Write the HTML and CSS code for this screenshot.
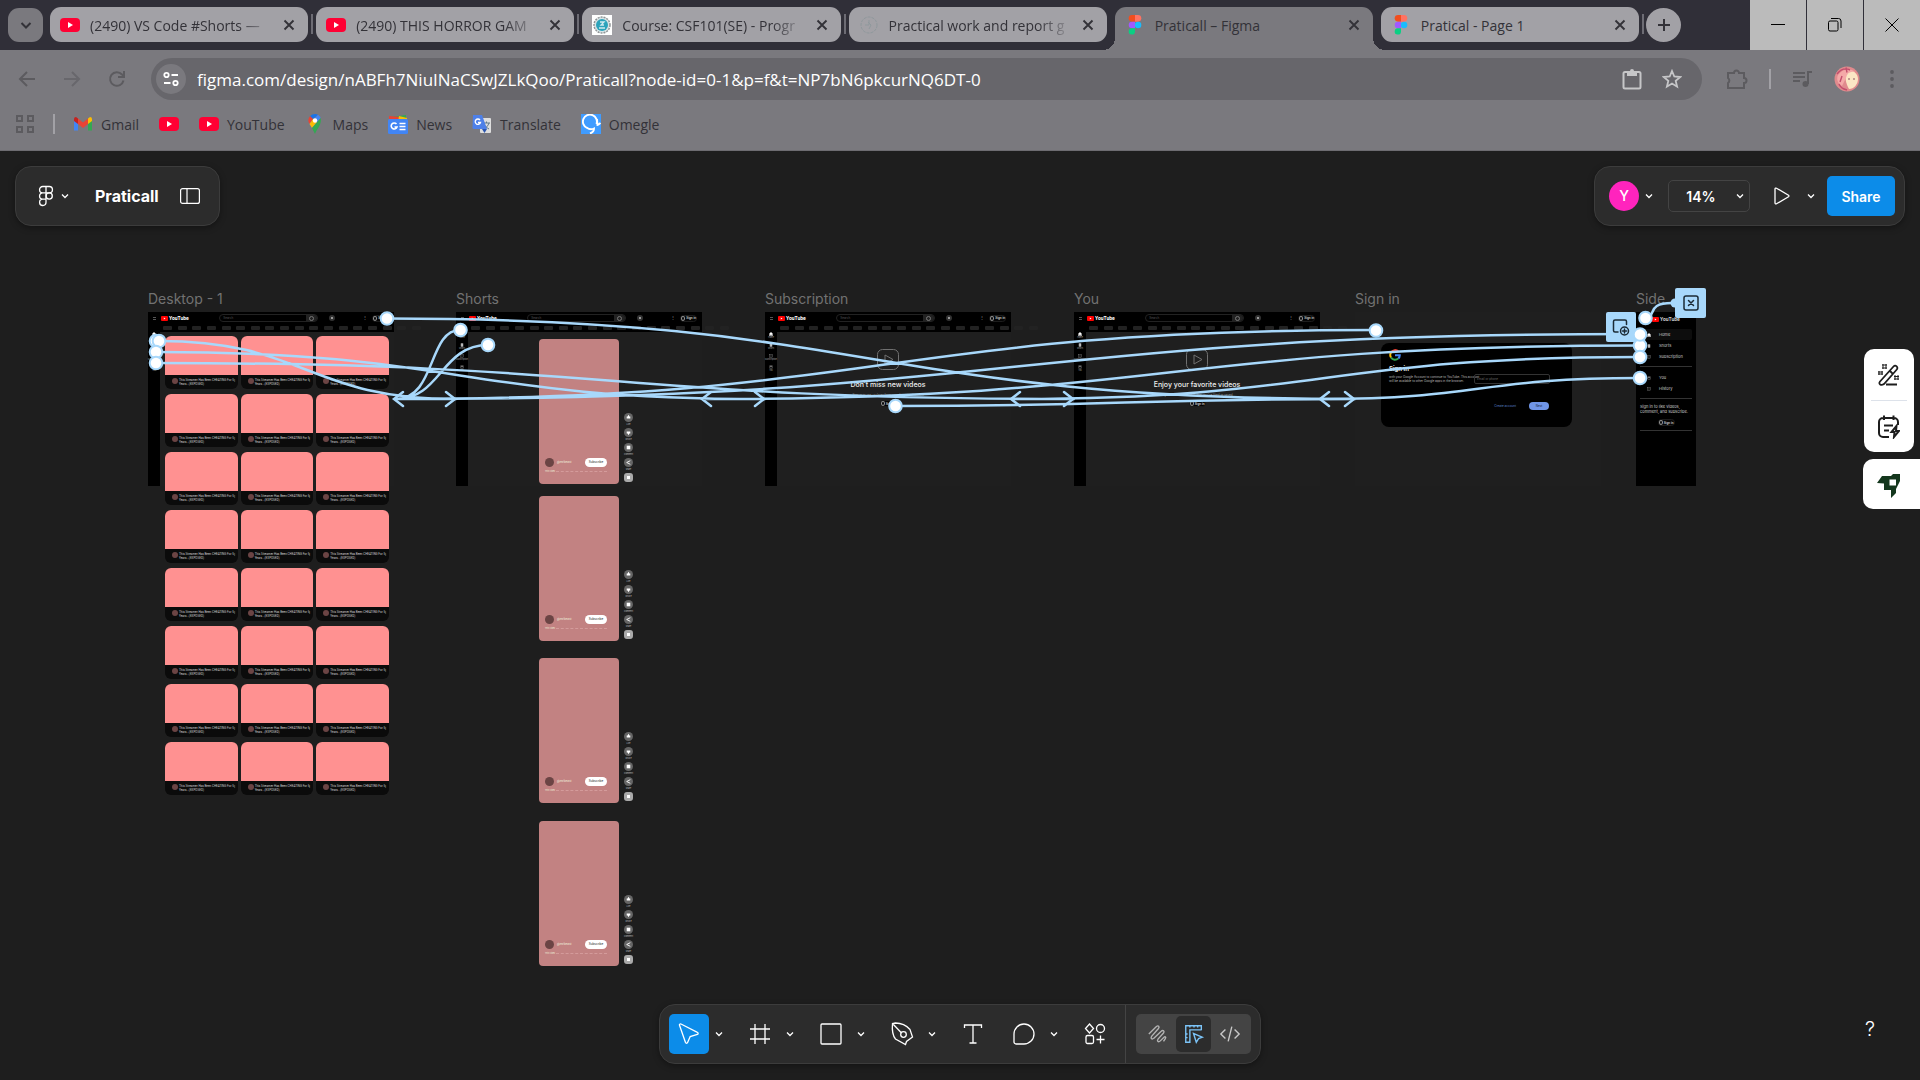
FILE: index.html
```
<!DOCTYPE html>
<html lang="en">
<head>
<meta charset="utf-8">
<title>Praticall – Figma</title>
<link rel="stylesheet" href="styles.css">
</head>
<body>
<svg class="defs" aria-hidden="true">
  <symbol id="caret" viewBox="0 0 8 8"><path d="M1 2.5 4 5.5 7 2.5" fill="none" stroke="currentColor" stroke-width="1.3"/></symbol>
  <symbol id="close" viewBox="0 0 12 12"><path d="M1.5 1.5l9 9M10.5 1.5l-9 9" stroke="currentColor" stroke-width="1.9"/></symbol>
  <symbol id="yt" viewBox="0 0 20 20"><rect y="3" width="20" height="14" rx="4" fill="#ff0033"/><path d="M8 7v6l5-3z" fill="#fff"/></symbol>
  <symbol id="figma" viewBox="0 0 12 19"><path d="M3.2 0H6v6.3H3.2a3.15 3.15 0 0 1 0-6.3z" fill="#f24e1e"/><path d="M6 0h2.8a3.15 3.15 0 0 1 0 6.3H6z" fill="#ff7262"/><path d="M3.2 6.3H6v6.3H3.2a3.15 3.15 0 0 1 0-6.3z" fill="#a259ff"/><circle cx="8.9" cy="9.5" r="3.1" fill="#1abcfe"/><path d="M3.2 12.6H6v3.2a3 3 0 1 1-2.8-3.2z" fill="#0acf83"/></symbol>
  <symbol id="ytmini" viewBox="0 0 7 5"><rect width="7" height="5" rx="1" fill="#f00"/><path d="M2.8 1.5v2l1.7-1z" fill="#fff"/></symbol>
</svg>

<header class="browser">
  <div class="tabstrip">
    <button class="tab-search" aria-label="Search tabs"><svg width="12" height="12" viewBox="0 0 12 12"><path d="M1.5 4 6 8.5 10.5 4" fill="none" stroke="#333238" stroke-width="2"/></svg></button>
    <div class="tabs">
      <div class="tab sep"><svg class="fav"><use href="#yt"/></svg><span class="title long">(2490) VS Code #Shorts —</span><button aria-label="Close tab"><svg><use href="#close"/></svg></button></div>
      <div class="tab sep"><svg class="fav"><use href="#yt"/></svg><span class="title long">(2490) THIS HORROR GAM</span><button aria-label="Close tab"><svg><use href="#close"/></svg></button></div>
      <div class="tab sep"><svg class="fav" viewBox="0 0 20 20"><path fill="#fff" d="M0 0h20v20H0z"/><circle cx="10" cy="10" r="8" fill="#d8e4e6" stroke="#8f9496" stroke-width="1.5" stroke-dasharray="2 1"/><circle cx="10" cy="10" r="6" fill="#2ba3bb"/><path d="M7 13h6M8 7h4l-3 3h3" stroke="#cfeaf0" stroke-width="1.3" fill="none"/></svg><span class="title long">Course: CSF101(SE) - Progr</span><button aria-label="Close tab"><svg><use href="#close"/></svg></button></div>
      <div class="tab"><svg class="fav" viewBox="0 0 20 20"><circle cx="10" cy="10" r="8" fill="none" stroke="#8f989c" stroke-width="1" stroke-dasharray="3 1"/><path d="M10 5v5h-4M9 7l3 3-2 4" stroke="#8f989c" fill="none"/></svg><span class="title long">Practical work and report g</span><button aria-label="Close tab"><svg><use href="#close"/></svg></button></div>
      <div class="tab active"><svg class="fav"><use href="#figma"/></svg><span class="title">Praticall – Figma</span><button aria-label="Close tab"><svg><use href="#close"/></svg></button></div>
      <div class="tab sep"><svg class="fav"><use href="#figma"/></svg><span class="title">Pratical - Page 1</span><button aria-label="Close tab"><svg><use href="#close"/></svg></button></div>
    </div>
    <button class="new-tab" aria-label="New tab"><svg width="14" height="14" viewBox="0 0 14 14"><path d="M7 1v12M1 7h12" stroke="#333238" stroke-width="2"/></svg></button>
    <div class="window-buttons">
      <button aria-label="Minimize"><svg viewBox="0 0 14 14"><path d="M0 6.5h14" stroke="#000"/></svg></button>
      <button aria-label="Restore"><svg viewBox="0 0 14 14"><path d="M.5 4.5a1.5 1.5 0 0 1 1.500-1.500h6.500a1.500 1.500 0 0 1 1.500 1.500v7a1.500 1.500 0 0 1-1.500 1.500H2a1.500 1.500 0 0 1-1.500-1.500zM3 .5h7.500a2.500 2.500 0 0 1 2.500 2.500v7" fill="none" stroke="#000"/></svg></button>
      <button aria-label="Close"><svg viewBox="0 0 14 14"><path d="M.5.5l13 13M13.500.5l-13 13" stroke="#000"/></svg></button>
    </div>
  </div>
  <div class="toolbar">
    <nav class="nav" aria-label="Navigation">
      <button aria-label="Back"><svg viewBox="0 0 18 18"><path d="M17 9H2M9 2 2 9l7 7" fill="none" stroke="#5c5b5f" stroke-width="2"/></svg></button>
      <button aria-label="Forward"><svg viewBox="0 0 18 18"><path d="M1 9h15M9 2l7 7-7 7" fill="none" stroke="#68676c" stroke-width="2"/></svg></button>
      <button aria-label="Reload"><svg viewBox="0 0 18 18"><path d="M15.500 10.500A6.800 6.800 0 1 1 14 4.500L16 7M16 1v6h-6" fill="none" stroke="#5c5b5f" stroke-width="2"/></svg></button>
    </nav>
    <div class="omnibox">
      <button class="site-info" aria-label="Site information"><svg width="16" height="16" viewBox="0 0 16 16" fill="none" stroke="#fff" stroke-width="1.8"><circle cx="3.500" cy="4" r="2.200"/><path d="M8.500 4H15M1 12h6.500"/><circle cx="12.500" cy="12" r="2.200"/></svg></button>
      <input type="text" aria-label="Address" value="figma.com/design/nABFh7NiuINaCSwJZLkQoo/Praticall?node-id=0-1&amp;p=f&amp;t=NP7bN6pkcurNQ6DT-0">
      <button aria-label="Clipboard"><svg width="20" height="22" viewBox="0 0 20 22"><rect x="1.500" y="4" width="17" height="16.500" rx="1.500" fill="none" stroke="#c6c6c8" stroke-width="2"/><path d="M5 3h3a2 2 0 0 1 4 0h3v5H5z" fill="#c6c6c8"/></svg></button>
      <button aria-label="Bookmark this page"><svg width="20" height="20" viewBox="0 0 20 20"><path d="M10 2l2.300 5.500 6 .5-4.600 3.900 1.400 5.800L10 14.600l-5.100 3.100 1.400-5.800L1.700 8l6-.5z" fill="none" stroke="#c6c6c8" stroke-width="1.800"/></svg></button>
    </div>
    <div class="actions">
      <button aria-label="Extensions"><svg width="22" height="22" viewBox="0 0 22 22"><path d="M2 5h6a2 2 0 0 1 5 0h5v5a2 2 0 0 1 0 5v5H2v-5a3 3 0 0 0 0-5z" fill="none" stroke="#5c5b5f" stroke-width="2"/></svg></button>
      <span class="bar"></span>
      <button class="media" aria-label="Media"><svg width="20" height="18" viewBox="0 0 20 18"><path d="M0 3h12M0 7h12M0 11h7M15 14V2h4" stroke="#5c5b5f" stroke-width="2" fill="none"/><circle cx="12.500" cy="14" r="3" fill="#5c5b5f"/></svg></button>
      <button class="profile" aria-label="Profile"><svg width="26" height="26" viewBox="0 0 26 26"><circle cx="13" cy="13" r="12.500" fill="#e08a8d"/><path d="M13 5c6-2 11 3 11 8s-4 10-9 10c-3-5-5-13-2-18z" fill="#fbe6c4"/><path d="M4 9c4-6 12-8 17-3-5-1-8 1-9 6l-4 8C4 18 2 13 4 9z" fill="#f4a9a8"/><path d="M3 8c4-5 9-6 13-4M5 18c1 3 4 5 8 6M8 10l-2 6M12 1.500l1 5" stroke="#c34e6d" stroke-width="1.400" fill="none"/><path d="M14 13h2M19 13h2" stroke="#8a5560"/></svg></button>
      <button aria-label="Menu"><svg width="6" height="20" viewBox="0 0 6 20" fill="#5c5b5f"><circle cx="3" cy="3" r="1.900"/><circle cx="3" cy="10" r="1.900"/><circle cx="3" cy="17" r="1.900"/></svg></button>
    </div>
  </div>
  <nav class="bookmarks" aria-label="Bookmarks">
    <button class="apps" aria-label="Apps"><svg width="20" height="20" viewBox="0 0 20 20" fill="none" stroke="#5c5b5f" stroke-width="2"><path d="M2 2h5v5H2zM13 2h5v5h-5zM2 13h5v5H2zM13 13h5v5h-5z"/></svg></button>
    <span class="bar"></span>
    <a href="#"><svg viewBox="0 0 20 20"><path d="M1 6v10.500h4V9z" fill="#4285f4"/><path d="M19 6v10.500h-4V9z" fill="#34a853"/><path d="M15 4.500 17 3a2 2 0 0 1 2 2v2l-4 3z" fill="#fbbc04"/><path d="M5 4.500 3 3a2 2 0 0 0-2 2v2l4 3z" fill="#c5221f"/><path d="M5 4.500l5 4 5-4V10l-5 4-5-4z" fill="#ea4335"/></svg>Gmail</a>
    <a href="#" aria-label="YouTube"><svg><use href="#yt"/></svg></a>
    <a href="#"><svg><use href="#yt"/></svg>YouTube</a>
    <a href="#"><svg viewBox="0 0 20 20"><path d="M10 0a6.500 6.500 0 0 0-5 2.300L8 5l5-4.300A6 6 0 0 0 10 0z" fill="#1a73e8"/><path d="M5 2.300A6.500 6.500 0 0 0 4.500 10L8 5z" fill="#ea4335"/><path d="M13 .7 4.500 10 7 14l8.700-10A7 7 0 0 0 13 .7z" fill="#4285f4"/><path d="M8 5l-3.500 5L7 14l5-6z" fill="#fbbc04"/><path d="M15.700 4 7 14l3 6c2-6 7-9 5.700-16z" fill="#34a853"/><circle cx="10" cy="6.500" r="2.200" fill="#fff"/></svg>Maps</a>
    <a href="#"><svg viewBox="0 0 20 20"><path d="M2 3l16-2v6H2z" fill="#34a853"/><path d="M1 2l12 1-1 4H1z" fill="#ea4335"/><path d="M11 2l8 2v4h-9z" fill="#fbbc04"/><rect y="5" width="20" height="15" rx="1.500" fill="#4285f4"/><path d="M8.500 10A3 3 0 1 0 9 13H6.500M11.500 9.500h6M11.500 12.500h6M11.500 15.500h6" stroke="#fff" stroke-width="1.600" fill="none"/></svg>News</a>
    <a href="#"><svg viewBox="0 0 20 20"><rect x="8" y="4" width="11" height="15" rx="1" fill="#dedede"/><path d="M11 9h7M14.500 7.500V9M17 9c-1 3-3 5-5 6M12.500 11c1 2 3 3 4.500 4" stroke="#607988" fill="none"/><path d="M1 1h9l5 14H2a1.500 1.500 0 0 1-1.500-1.500z" fill="#4e80e8"/><path d="M10 15h5l-2.500 4z" fill="#2b56b0"/><path d="M8 6A2.700 2.700 0 1 0 8.500 8.500H6" stroke="#fff" stroke-width="1.300" fill="none"/></svg>Translate</a>
    <a href="#"><svg viewBox="0 0 20 20"><path fill="#409cff" d="M0 0h20v20H0z"/><path d="M6 14A7 7 0 1 1 15.500 10M16 5l.5 6c1 0 2-1 3-2M5.500 13.500C9 16 12 15 13 14.500c0 2-1.500 4-4 5" fill="none" stroke="#fff" stroke-width="1.900"/></svg>Omegle</a>
  </nav>
</header>

<main class="canvas">
  <div class="world" id="world"></div>
  <svg class="noodles" width="1920" height="929" viewBox="0 151 1920 929" fill="none" stroke="#a8d8fb" stroke-width="2.500" stroke-linecap="round">
    <path d="M158 341C307 341 307 399 456 399M156 352C460 352 460 399 765 399M156 363C615 363 615 399 1074 399M387 318.500C871 318.500 871 399 1355 399M460 330C428 330 436 399 396 399M488 345C441 345 441 399 396 399M1376 330C885 330 885 399 396 399M1640 334C1017 334 1017 399 396 399M1640 345.500C1171 345.500 1171 399 704 399M1640 357C1325 357 1325 399 1012 399M1640 378C1480 378 1480 399 1322 399M896 406C1125 406 1125 399 1355 399M1646 318C1657 316 1646 303 1672 303"/>
    <path d="M403 392l-9 7 9 7M446 392l9 7-9 7M711 392l-9 7 9 7M755 392l9 7-9 7M1020 392l-9 7 9 7M1064 392l9 7-9 7M1329 392l-9 7 9 7M1345 392l9 7-9 7"/>
    <g fill="#a8d8fb" stroke="none"><rect x="1606" y="312" width="30" height="30" rx="2"/><rect x="1675" y="288" width="31" height="30" rx="2"/><circle cx="1675" cy="303" r="4.500"/></g>
    <g stroke="#1b2a35" stroke-width="1.500"><rect x="1684" y="296" width="14" height="14" rx="2"/><path d="M1688.500 300.500l5 5M1693.500 300.500l-5 5"/><path d="M1618 332h-3a1.500 1.500 0 0 1-1.500-1.500v-9a1.500 1.500 0 0 1 1.500-1.500h10a1.500 1.500 0 0 1 1.500 1.500v3"/><circle cx="1624.500" cy="331" r="4"/><path d="M1624.500 329v4M1622.500 331h4"/></g>
    <g fill="#fff" stroke-width="2">
      <circle cx="387" cy="318.500" r="6.300"/><circle cx="156" cy="341" r="6.300"/><circle cx="159" cy="341" r="6.300"/><circle cx="156" cy="352" r="6.300"/><circle cx="156" cy="363" r="6.300"/><circle cx="460.500" cy="330" r="6.300"/><circle cx="488" cy="345" r="6.300"/><circle cx="895.500" cy="406" r="6.300"/><circle cx="1376" cy="330.500" r="6.300"/><circle cx="1645.500" cy="318" r="6.300"/><circle cx="1640" cy="345.500" r="6.300"/><circle cx="1640" cy="334.500" r="6.300"/><circle cx="1640" cy="357" r="6.300"/><circle cx="1640" cy="378" r="6.300"/>
    </g>
  </svg>

  <section class="panel file-panel">
    <button class="main-menu" aria-label="Main menu"><svg width="16" height="22" viewBox="0 0 16 22" fill="none" stroke="#fff" stroke-width="1.300"><path d="M8 1.500H4.700a3.100 3.100 0 0 0 0 6.300H8zM8 1.500h3.300a3.100 3.100 0 0 1 0 6.300H8zM8 7.800H4.700a3.100 3.100 0 0 0 0 6.300H8zM8 14.100H4.700A3.200 3.200 0 1 0 8 17.300z"/><circle cx="11.200" cy="11" r="3.100"/></svg><svg class="caret"><use href="#caret"/></svg></button>
    <h1>Praticall</h1>
    <button aria-label="Minimize UI"><svg width="20" height="16" viewBox="0 0 20 16" fill="none" stroke="#fff" stroke-width="1.200"><rect x=".6" y=".6" width="18.800" height="14.800" rx="2"/><path d="M7 .6v14.800"/></svg></button>
  </section>

  <section class="panel share-panel">
    <button class="user" aria-label="User menu"><span class="avatar">Y</span><svg class="caret"><use href="#caret"/></svg></button>
    <button class="zoom-level">14%<svg class="caret"><use href="#caret"/></svg></button>
    <button class="play" aria-label="Present"><svg width="16" height="18" viewBox="0 0 16 18"><path d="M1 2v14a1 1 0 0 0 1.500.8l12-7a1 1 0 0 0 0-1.600l-12-7A1 1 0 0 0 1 2z" fill="none" stroke="#fff" stroke-width="1.300"/></svg><svg class="caret"><use href="#caret"/></svg></button>
    <button class="share">Share</button>
  </section>

  <aside class="plugins">
    <div class="plugin-group">
      <button aria-label="Magic wand"><svg width="22" height="24" viewBox="0 0 22 24" fill="none" stroke="#1d1d1d" stroke-width="1.800"><path d="M2 18.500 15.500 3.500a2.200 2.200 0 0 1 3.300 3L6 21c-3 2-6 0-4-2.500zM12 8l3 3M8 21.500h11"/><path d="M5 1v5M8 1v5M4 2h5M4 5h5M1 8v4M4 8v4M0 9h5M0 11h5M17 12v5M20 12v5M16 13.500h5M16 16h5" stroke-width="1"/></svg></button>
      <button aria-label="Quick notes"><svg width="22" height="24" viewBox="0 0 22 24" fill="none" stroke="#1d1d1d" stroke-width="2"><path d="M20 10V7a4 4 0 0 0-4-4H5a4 4 0 0 0-4 4v11a4 4 0 0 0 4 4h6M6 .5v4.500M15.500 .5v4.500M6 10.500h9M6 15.500h5"/><path d="M18.500 11l-5 6h3l-.5 5 5-6h-3z"/></svg></button>
    </div>
    <button class="rocket" aria-label="Launch"><svg width="24" height="24" viewBox="0 0 24 24"><path d="M0 9l5-7h9l2-2h7v7l-4 8v4l-5 5v-8H7V9.500z" fill="#14371d"/><path d="M12.500 5.500H19v6h-6.500z" fill="#fff"/></svg></button>
  </aside>

  <section class="panel tools">
    <div class="tool-set">
      <button class="current" aria-label="Move"><svg viewBox="0 0 24 24"><path d="M2.500 3.300 8.500 20.500c.4 1 1.700 1 2.100 0l2.600-6 7.200-2c1-.4 1-1.800 0-2.200L4 2c-1-.4-1.900.4-1.500 1.300z"/></svg></button>
      <button class="more" aria-label="Move options"><svg class="caret"><use href="#caret"/></svg></button>
      <button aria-label="Frame"><svg viewBox="0 0 24 24"><path d="M7 2v20M17 2v20M2 7h20M2 17h20"/></svg></button>
      <button class="more" aria-label="Frame options"><svg class="caret"><use href="#caret"/></svg></button>
      <button aria-label="Rectangle"><svg viewBox="0 0 24 24"><rect x="2" y="2" width="20" height="20" rx="1"/></svg></button>
      <button class="more" aria-label="Shape options"><svg class="caret"><use href="#caret"/></svg></button>
      <button aria-label="Pen"><svg viewBox="0 0 24 24"><path d="M2.500 1.500C2 7 3 14 5.500 17l10 5.500 1-3 6-4.500-2.500-7.500C16 3 10 1 5.500 1zM2.500 1.500l9 9.500"/><circle cx="13.500" cy="12.500" r="2.800"/></svg></button>
      <button class="more" aria-label="Pen options"><svg class="caret"><use href="#caret"/></svg></button>
      <button class="wide" aria-label="Text"><svg viewBox="0 0 24 24"><path d="M3.500 6V3h17v3M12 3v18M8.500 21h7"/></svg></button>
      <button aria-label="Comment"><svg viewBox="0 0 24 24"><path d="M2 12a10 10 0 1 1 10 10H4a2 2 0 0 1-2-2z"/></svg></button>
      <button class="more" aria-label="Comment options"><svg class="caret"><use href="#caret"/></svg></button>
      <button class="wide" aria-label="Actions"><svg viewBox="0 0 24 24"><path d="M6.500 2l4 4.500-4 4.500-4-4.500zM17.500 13.500v8M13.500 17.500h8"/><circle cx="17.500" cy="6.500" r="4"/><rect x="3" y="13.500" width="7.500" height="8" rx="1.500"/></svg></button>
    </div>
    <div class="modes">
      <button aria-label="Draw"><svg viewBox="0 0 24 24" stroke="#b4b4b4"><path d="M2 12 10 4c2.500-2 4 0 2.500 2L5 14.500c-1.500 2.500.5 4 2.500 2L15.500 9c2-2 4 0 2.500 2L12 17.500c-1.500 2.500.5 4 2.500 2l4-4c1.500-1 2.500 0 1.500 1.500L18 20"/></svg></button>
      <button class="current" aria-label="Design"><svg viewBox="0 0 24 24" stroke="#7cc4f8"><path d="M20 8V3H3v18h4.500V7.500H20M7.500 3v2M12 3v2M16 3v2M3 12h2M3 16h2M11.500 11.500l3 9.500 2.500-4 4-1.500z"/></svg></button>
      <button aria-label="Dev mode"><svg viewBox="0 0 24 24" stroke="#c8c8c8"><path d="M7 7l-5 5 5 5M17 7l5 5-5 5M14 4l-4 16"/></svg></button>
    </div>
  </section>
  <button class="help" aria-label="Help">?</button>
</main>
<script src="canvas.js"></script>
</body>
</html>
```
FILE: styles.css
```
* { box-sizing: border-box; }
body { margin: 0; min-height: 100vh; display: flex; flex-direction: column; background: #1e1e1e; font-family: Inter, "Liberation Sans", sans-serif; }
button { background: none; border: 0; padding: 0; color: inherit; font: inherit; display: flex; align-items: center; justify-content: center; }
.defs { position: absolute; width: 0; height: 0; }

/* Browser chrome */
.browser { background: #7a797e; font-family: "Open Sans", "Noto Sans", sans-serif; font-size: 14px; color: #333238; border-bottom: 1px solid #6d6c71; }
.tabstrip { height: 50px; display: flex; background: #302f38; padding-left: 8px; }
.tab-search { width: 35px; height: 34px; margin: 8px 7px 0 0; border-radius: 11px; background: #7a797e; }
.tabs { flex: 0 1 1589px; display: flex; gap: 8px; padding-top: 7px; min-width: 0; }
.tab { position: relative; flex: 1 1 0; min-width: 0; height: 35px; display: flex; align-items: center; padding: 0 13px 0 10px; background: #a2a1a6; border-radius: 11px; }
.tab .fav { width: 20px; height: 20px; flex: none; }
.tab .title { flex: 1; min-width: 0; margin: 0 8px 0 10px; padding-top: 1px; white-space: nowrap; }
.tab .title.long { mask-image: linear-gradient(to right, #000 80%, transparent); }
.tab button svg { width: 12px; height: 12px; }
.tab.sep::after { content: ""; position: absolute; right: -5px; top: 7px; width: 2px; height: 20px; background: #6d6c74; }
.tab.active { background: #7a797e; height: 43px; padding-bottom: 8px; border-radius: 11px 11px 0 0; }
.tab.active::before, .tab.active::after { content: ""; position: absolute; bottom: 0; width: 12px; height: 12px; }
.tab.active::before { right: 100%; background: radial-gradient(circle at 0 0, transparent 12px, #7a797e 12px); }
.tab.active::after { left: 100%; background: radial-gradient(circle at 100% 0, transparent 12px, #7a797e 12px); }
.new-tab { width: 35px; height: 34px; margin: 8px 0 0 7px; border-radius: 50%; background: #a2a1a6; }
.window-buttons { margin-left: auto; display: flex; gap: 1px; }
.window-buttons button { width: 56px; background: #bbb; }
.window-buttons svg { width: 14px; height: 14px; }

.toolbar { display: flex; align-items: center; padding: 8px 25px 0 18px; }
.nav { display: flex; gap: 27px; margin-right: 25px; }
.nav svg { width: 18px; height: 18px; display: block; }
.omnibox { flex: 1; display: flex; align-items: center; gap: 20px; height: 42px; border-radius: 21px; background: #67666b; padding: 0 20px 0 5px; }
.site-info { width: 30px; height: 30px; border-radius: 50%; background: #7a797e; }
.omnibox input { flex: 1; min-width: 0; margin-left: -9px; padding: 0; border: 0; background: none; color: #fff; font: 17px "Open Sans", "Noto Sans", sans-serif; }
.actions { display: flex; align-items: center; margin-left: 24px; }
.bar { width: 2px; height: 20px; background: #a2a1a6; }
.actions .bar { margin: 0 22px 0 21px; }
.media { margin-right: 21px; }
.profile { margin-right: 29px; }
.bookmarks { height: 50px; display: flex; align-items: center; gap: 18px; padding: 0 0 2px 15px; }
.bookmarks a { display: flex; align-items: center; gap: 8px; color: inherit; text-decoration: none; }
.bookmarks a + a { margin-left: 2px; }
.bookmarks a svg { width: 20px; height: 20px; }

/* Canvas */
.canvas { flex: 1; position: relative; overflow: hidden; min-height: 820px; color: #fff; }
.world, .noodles { position: absolute; left: 0; top: 0; }
.noodles { display: block; }
.frame-label { position: absolute; top: 139px; margin: 0; font-size: 14px; line-height: 18px; font-weight: 400; color: #727272; white-space: nowrap; }
.frame { position: absolute; top: 161px; width: 246px; height: 174px; background: #1f1f1f; font-size: 3px; line-height: 4px; }
.f-desktop { left: 148px; }
.f-shorts { left: 456px; }
.f-sub { left: 765px; }
.f-you { left: 1074px; }
.f-signin { left: 1355px; }
.f-side { left: 1636px; }
.frame.f-signin { padding: 31px 0 0 26px; }

.site-head { height: 20px; background: #000; }
.site-bar { height: 12px; display: flex; align-items: center; padding: 0 5px; }
.burger { width: 3px; height: 3px; border: solid #555; border-width: 1px 0; margin-right: 5px; }
.logo { display: flex; align-items: center; gap: 1px; width: 59px; font: 700 5px/6px Roboto, sans-serif; }
.logo svg { width: 7px; height: 5px; }
.search { width: 100px; height: 8px; border: 1px solid #222; border-radius: 4px; display: flex; color: #555; padding-left: 3px; line-height: 6px; margin-right: 11px; }
.search i { margin-left: auto; width: 11px; background: #222; border-radius: 0 3px 3px 0; display: flex; align-items: center; justify-content: center; }
.search i::after { content: ""; width: 3px; height: 3px; border: 1px solid #777; border-radius: 50%; }
.mic { width: 6px; height: 6px; border-radius: 50%; border: 2px solid #333; background: #bbb; }
.dots { margin: 0 5px 0 28px; color: #999; font-size: 4px; }
.pill { display: flex; align-items: center; justify-content: center; gap: 1px; height: 7px; width: 17px; border-radius: 4px; border: 1px solid #1c1c1c; background: #050505; font-size: 3px; line-height: 4px; font-weight: 600; white-space: nowrap; color: #ddd; }
.pill::before { content: ""; width: 3px; height: 3px; border: 1px solid #999; border-radius: 50%; }
.chips { display: flex; justify-content: space-between; width: 258px; margin: 2px 0 0 15px; }
.chips i { width: 9px; height: 4px; border-radius: 1px; background: #222; }
.rail { width: 12px; height: 154px; background: #000; display: flex; flex-direction: column; align-items: center; gap: 1px; font-size: 2px; line-height: 3px; color: #aaa; }
.rail span { height: 10px; display: flex; flex-direction: column; align-items: center; width: 12px; }
.rail svg { width: 4px; height: 4px; display: block; }
.cards { position: absolute; left: 165px; top: 185px; width: 224px; display: grid; grid-template-columns: repeat(3, 1fr); gap: 5px 3px; }
.card { height: 53px; border-radius: 6px; overflow: hidden; background: #0b0b0b; }
.thumb { height: 39px; background: #ff9191; }
.meta { display: flex; padding: 3px 2px 0 7px; white-space: nowrap; color: #ccc; font: 3px/4px Roboto, sans-serif; }
.meta b { width: 6px; height: 6px; border-radius: 50%; background: #6b4444; margin-right: 1px; }
.meta p { margin: 0; flex: 1; min-width: 0; }
.short { position: absolute; left: 539px; display: flex; align-items: flex-end; gap: 5px; font-size: 2px; line-height: 3px; }
.short-1 { top: 188px; }
.short-2 { top: 345px; }
.short-3 { top: 507px; }
.short-4 { top: 670px; }
.video { width: 80px; height: 145px; border-radius: 4px; background: #c28282; padding: 119px 12px 0 6px; color: #eed; }
.author { display: flex; align-items: center; font-size: 3px; }
.author b { width: 9px; height: 9px; border-radius: 50%; background: #6b4444; margin-right: 3px; }
.author button { margin-left: auto; width: 22px; height: 9px; border-radius: 5px; background: #fff; color: #222; }
.caption { margin: 3px 0 0; display: flex; align-items: center; gap: 1px; }
.caption::after { content: ""; flex: 1; border-top: 1px dashed #d49b9b; }
.reactions { display: flex; flex-direction: column; align-items: center; width: 9px; padding-bottom: 2px; color: #bbb; }
.reactions span { display: flex; flex-direction: column; align-items: center; height: 15px; gap: 1px; }
.reactions svg { width: 9px; height: 9px; display: block; }
.reactions i { width: 9px; height: 9px; border-radius: 3px; border: 3px solid #aaa; background: #fff; }

.empty { position: absolute; left: 12px; right: 12px; top: 37px; display: flex; flex-direction: column; align-items: center; color: #999; white-space: nowrap; }
.empty svg { width: 22px; height: 21px; }
.empty h2 { margin: 10px 0 3px; font-size: 7px; line-height: 10px; font-weight: 500; color: #eee; }
.empty p { margin: 0 0 3px; }

.login { width: 191px; height: 84px; border-radius: 8px; background: #000; padding: 6px 22px 0 8px; color: #bbb; display: grid; grid-template-columns: 83px 1fr; grid-template-rows: 14px 11px 28px 9px; column-gap: 2px; white-space: nowrap; }
.login svg { width: 12px; height: 12px; grid-column: 1 / 3; }
.login h2 { margin: 0; font-size: 6px; line-height: 8px; color: #eee; grid-column: 1 / 3; align-self: center; }
.login p { margin: 1px 0 0; }
.login input { width: 100%; height: 10px; border: 1px solid #333; border-radius: 2px; background: none; font: 3px Inter, sans-serif; padding: 0 2px; }
.login input::placeholder { color: #666; }
.login-actions { grid-column: 1 / 3; display: flex; justify-content: flex-end; gap: 13px; padding-right: 1px; }
.login-actions a { color: #5c82cc; text-decoration: none; line-height: 9px; }
.login-actions button { width: 20px; height: 8px; border-radius: 4px; background: #7096e8; color: #123; }

.frame.f-side { width: 60px; background: #000; padding: 4px; color: #ccc; font-size: 4px; line-height: 5px; }
.f-side .logo { width: auto; margin: 0 0 7px 12px; }
.f-side a { display: flex; align-items: center; height: 11px; padding-left: 7px; gap: 8px; color: inherit; text-decoration: none; border-radius: 2px; }
.f-side a svg { width: 4px; height: 4px; }
.f-side a.on { background: #0d0d0d; }
.f-side hr { margin: 4px 0 5px; border: 0; border-top: 1px solid #333; }
.f-side p { margin: 0 0 5px; white-space: nowrap; }
.f-side .pill { margin: 0 auto 4px; }

/* Floating UI */
.panel { position: absolute; height: 60px; background: #2c2c2c; border: 1px solid #3c3c3c; border-radius: 16px; box-shadow: 0 2px 6px rgba(0, 0, 0, .35); display: flex; align-items: center; }
.caret { width: 8px; height: 8px; color: #fff; }
.file-panel { left: 15px; top: 15px; padding: 0 19px 0 22px; }
.main-menu { gap: 7px; }
.file-panel h1 { margin: 0 21px 0 26px; font-size: 16px; line-height: 20px; font-weight: 700; }
.share-panel { right: 15px; top: 15px; padding: 0 9px 0 14px; font-size: 14px; font-weight: 500; }
.user { gap: 6px; }
.avatar { width: 30px; height: 30px; border-radius: 50%; background: #ff24bd; line-height: 30px; }
.zoom-level { width: 82px; height: 32px; margin: 0 24px 0 15px; border: 1px solid #444; border-radius: 5px; gap: 20px; padding-left: 12px; font-weight: 600; }
.play { gap: 17px; margin-right: 12px; }
.share { width: 68px; height: 40px; border-radius: 5px; background: #0c8ce9; font-weight: 600; }
.plugins { position: absolute; right: 0; top: 198px; display: flex; flex-direction: column; align-items: flex-end; gap: 7px; }
.plugin-group { width: 50px; margin-right: 6px; padding: 0 7px; background: #fff; border-radius: 10px; }
.plugin-group button { width: 100%; height: 51px; }
.plugin-group button + button { border-top: 1px solid #dde2ea; height: 52px; }
.rocket { width: 57px; height: 50px; background: #fff; border-radius: 10px 0 0 10px; padding: 3px 6px 0 0; }
.tools { bottom: 16px; left: 50%; transform: translateX(-50%); }
.tool-set { display: flex; align-items: center; padding: 0 10px 0 9px; height: 100%; border-right: 1px solid #444; }
.tool-set button { width: 40px; height: 40px; border-radius: 5px; }
.tool-set .more { width: 20px; margin-right: 11px; }
.tool-set .wide { margin-right: 11px; }
.tool-set .wide:last-child { margin-right: 0; }
.tool-set button > svg:not(.caret), .modes svg { width: 24px; height: 24px; fill: none; stroke-width: 1.3; }
.tool-set button > svg:not(.caret) { stroke: #fff; }
.tool-set .current { background: #0c8ce9; }
.modes { display: flex; align-items: center; margin: 0 9px 0 10px; height: 40px; border-radius: 5px; background: #444; padding: 0 3px; }
.modes button { width: 37px; height: 36px; border-radius: 5px; }
.modes .current { width: 35px; background: #2c2c2c; }
.modes svg { width: 22px; height: 22px; stroke-width: 1.5; }
.help { position: absolute; right: 38px; bottom: 39px; width: 24px; height: 24px; font-size: 20px; font-weight: 300; }
```
FILE: canvas.js
```
const svg = (body, box = 10) => `<svg viewBox="0 0 ${box} ${box}">${body}</svg>`;
const repeat = (n, html) => Array(n).fill(html).join("");

const icons = {
  home: svg('<path d="M5 0 0 5h1v5h3V7h2v3h3V5h1z" fill="#fff"/>'),
  shorts: svg('<path d="M2 1h6v8H2z" fill="#ddd"/><path d="M4 3v4l3-2z" fill="#333"/>'),
  subs: svg('<rect x="1" y="1" width="8" height="8" fill="none" stroke="#888"/><path d="M4 3v4l3-2z" fill="#888"/>'),
  you: svg('<circle cx="5" cy="5" r="4.500" fill="none" stroke="#999"/><circle cx="5" cy="4" r="2" fill="#999"/>'),
};

const logo = '<div class="logo"><svg><use href="#ytmini"/></svg>YouTube</div>';

const siteHead = `
  <div class="site-head">
    <div class="site-bar"><span class="burger"></span>${logo}
      <div class="search">Search<i></i></div><span class="mic"></span><span class="dots">⋮</span><span class="pill">Sign in</span>
    </div>
    <div class="chips">${repeat(18, "<i></i>")}</div>
  </div>
  <div class="rail">
    <span>${icons.home}Home</span><span>${icons.shorts}Shorts</span><span>${icons.subs}Subscription</span><span>${icons.you}You</span>
  </div>`;

const frame = (key, name, body) =>
  `<h2 class="frame-label f-${key}">${name}</h2><div class="frame f-${key}">${body}</div>`;

const card = `
  <div class="card"><div class="thumb"></div>
    <div class="meta"><b></b><p>This Streamer Has Been CHEATING For 5<br>Years...(EXPOSED)</p>⋮</div>
  </div>`;

const reaction = (shape, label) =>
  `<span>${svg('<circle cx="5" cy="5" r="5" fill="#666"/>' + shape)}${label}</span>`;

const short = (n) => `
  <div class="short short-${n}">
    <div class="video">
      <div class="author"><b></b>@mrbeast<button>Subscribe</button></div>
      <p class="caption">This Video</p>
    </div>
    <div class="reactions">
      ${reaction('<path d="M3 6h4V4H6L5 2 4 4H3z" fill="#fff"/>', "Like")}
      ${reaction('<path d="M3 4h4v2H6L5 8 4 6H3z" fill="#fff"/>', "Dislike")}
      ${reaction('<path d="M3 3h4v4H3z" fill="#fff"/>', "Comment")}
      ${reaction('<path d="M7 3 3 5l4 2" fill="none" stroke="#fff"/>', "Share")}
      <i></i>
    </div>
  </div>`;

const empty = (title, text) => `
  <div class="empty">
    <svg viewBox="0 0 22 21" fill="none" stroke="#707070"><rect x=".5" y=".5" width="21" height="20" rx="5"/><path d="M8 6v9l8-4.500z"/></svg>
    <h2>${title}</h2><p>${text}</p><span class="pill">Sign in</span>
  </div>`;

const login = `
  <div class="login">
    <svg viewBox="0 0 12 12" fill="none" stroke-width="2"><path d="M2 3.500A4.700 4.700 0 0 1 9.500 2.600" stroke="#ea4335"/><path d="M2 8.500a4.700 4.700 0 0 1 0-5" stroke="#fbbc04"/><path d="M9.300 9.400A4.700 4.700 0 0 1 2 8.500" stroke="#34a853"/><path d="M6 6.200h4.800c0 1.500-.6 2.500-1.500 3.200" stroke="#4285f4"/></svg>
    <h2>Sign in</h2>
    <p>with your Google Account to continue to YouTube. This account<br>will be available to other Google apps in the browser.</p>
    <input type="text" aria-label="Email or phone" placeholder="Email or phone">
    <div class="login-actions"><a href="#">Create account</a><button>Next</button></div>
  </div>`;

const side = `
  ${logo}
  <a href="#" class="on">${icons.home}Home</a>
  <a href="#">${icons.shorts}Shorts</a>
  <a href="#">${icons.subs}Subscription</a>
  <hr>
  <a href="#">${icons.you}You</a>
  <a href="#">${icons.subs}History</a>
  <hr>
  <p>Sign in to like videos,<br>comment, and subscribe.</p>
  <span class="pill">Sign in</span>
  <hr>`;

document.getElementById("world").innerHTML =
  frame("desktop", "Desktop - 1", siteHead) +
  `<div class="cards">${repeat(24, card)}</div>` +
  frame("shorts", "Shorts", siteHead) +
  [1, 2, 3, 4].map(short).join("") +
  frame("sub", "Subscription", siteHead + empty("Don’t miss new videos", "Sign in to see updates from your favorite channels")) +
  frame("you", "You", siteHead + empty("Enjoy your favorite videos", "Sign in to access videos that you’ve liked or saved")) +
  frame("signin", "Sign in", login) +
  frame("side", "Side", side);
```
